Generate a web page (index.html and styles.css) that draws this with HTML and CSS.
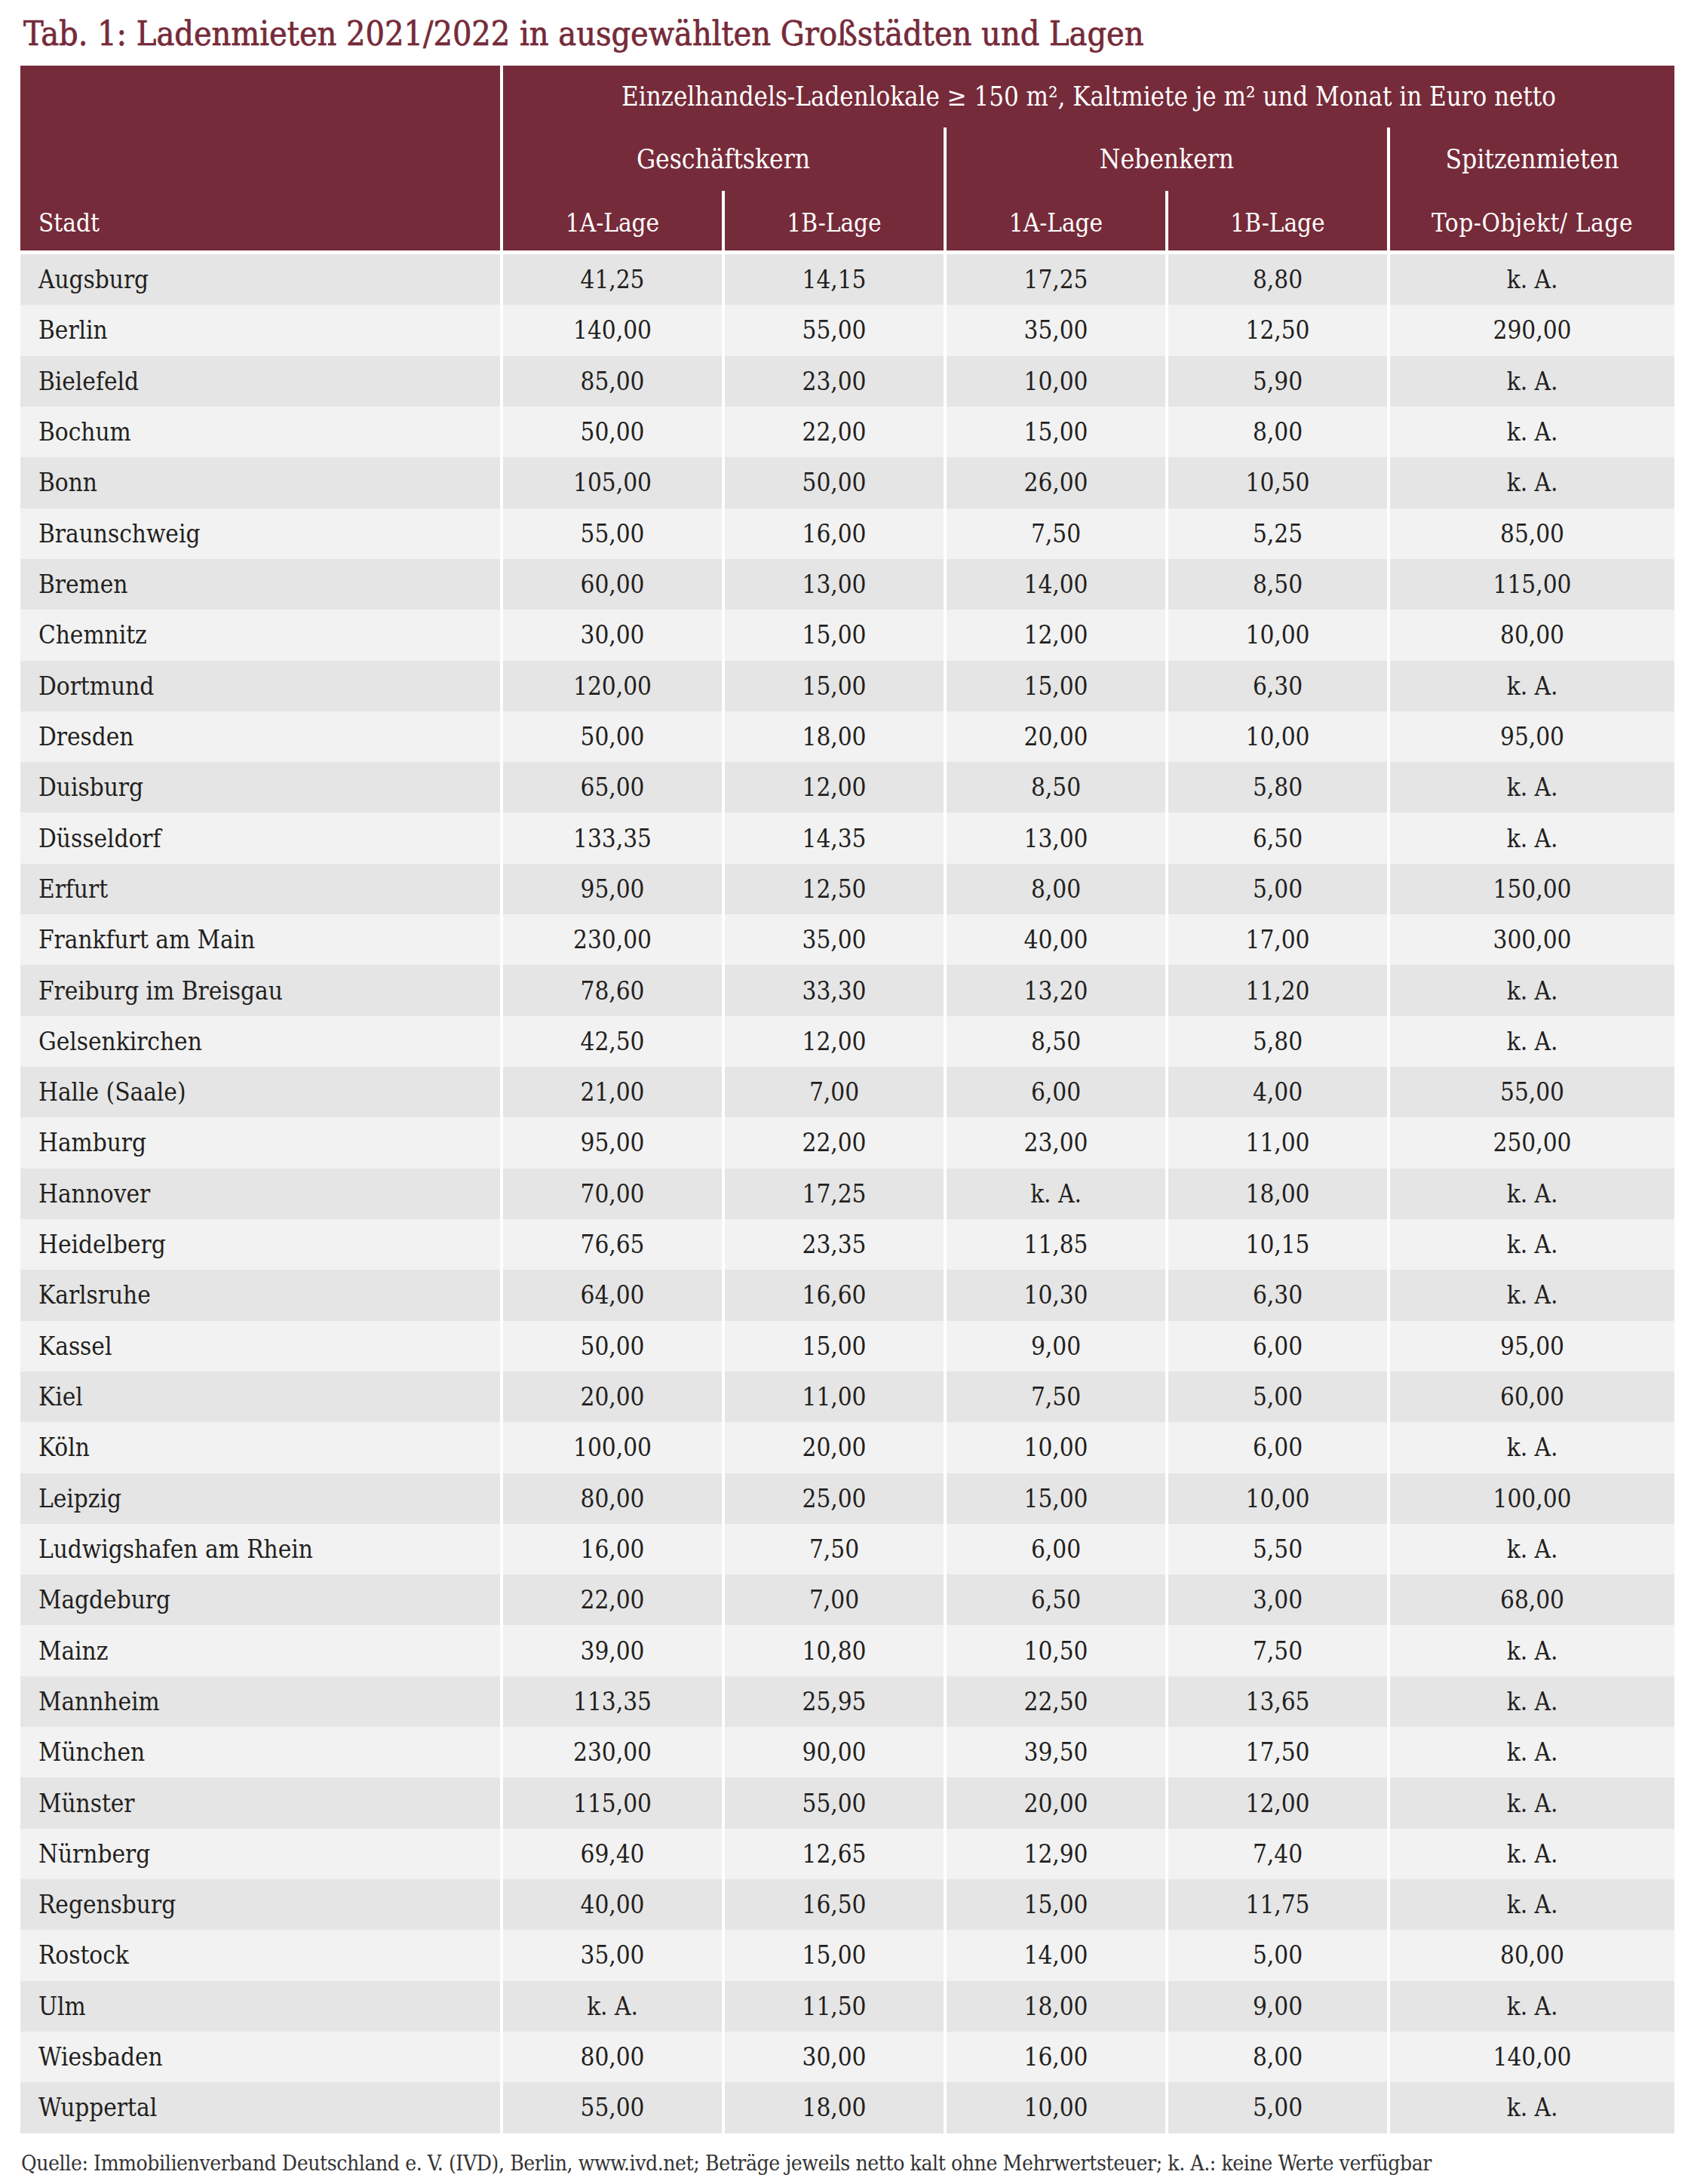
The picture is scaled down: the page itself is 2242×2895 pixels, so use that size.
FILE: index.html
```html
<!DOCTYPE html>
<html lang="de">
<head>
<meta charset="utf-8">
<title>Tab. 1: Ladenmieten 2021/2022</title>
<link rel="stylesheet" href="styles.css">
</head>
<body>
<div class="page">
  <h1 class="title">Tab. 1: Ladenmieten 2021/2022 in ausgewählten Großstädten und Lagen</h1>
  <table class="rent">
    <colgroup>
      <col class="c-city"><col class="c-num"><col class="c-num"><col class="c-num"><col class="c-num"><col class="c-top">
    </colgroup>
    <thead>
      <tr class="h1row">
        <th rowspan="3" class="th-city">Stadt</th>
        <th colspan="5">Einzelhandels-Ladenlokale ≥ 150 m², Kaltmiete je m² und Monat in Euro netto</th>
      </tr>
      <tr class="h2row">
        <th colspan="2">Geschäftskern</th>
        <th colspan="2">Nebenkern</th>
        <th>Spitzenmieten</th>
      </tr>
      <tr class="h3row">
        <th>1A-Lage</th>
        <th>1B-Lage</th>
        <th>1A-Lage</th>
        <th>1B-Lage</th>
        <th class="th-top">Top-Objekt/ Lage</th>
      </tr>
    </thead>
    <tbody>
      <tr><td>Augsburg</td><td>41,25</td><td>14,15</td><td>17,25</td><td>8,80</td><td>k. A.</td></tr>
      <tr><td>Berlin</td><td>140,00</td><td>55,00</td><td>35,00</td><td>12,50</td><td>290,00</td></tr>
      <tr><td>Bielefeld</td><td>85,00</td><td>23,00</td><td>10,00</td><td>5,90</td><td>k. A.</td></tr>
      <tr><td>Bochum</td><td>50,00</td><td>22,00</td><td>15,00</td><td>8,00</td><td>k. A.</td></tr>
      <tr><td>Bonn</td><td>105,00</td><td>50,00</td><td>26,00</td><td>10,50</td><td>k. A.</td></tr>
      <tr><td>Braunschweig</td><td>55,00</td><td>16,00</td><td>7,50</td><td>5,25</td><td>85,00</td></tr>
      <tr><td>Bremen</td><td>60,00</td><td>13,00</td><td>14,00</td><td>8,50</td><td>115,00</td></tr>
      <tr><td>Chemnitz</td><td>30,00</td><td>15,00</td><td>12,00</td><td>10,00</td><td>80,00</td></tr>
      <tr><td>Dortmund</td><td>120,00</td><td>15,00</td><td>15,00</td><td>6,30</td><td>k. A.</td></tr>
      <tr><td>Dresden</td><td>50,00</td><td>18,00</td><td>20,00</td><td>10,00</td><td>95,00</td></tr>
      <tr><td>Duisburg</td><td>65,00</td><td>12,00</td><td>8,50</td><td>5,80</td><td>k. A.</td></tr>
      <tr><td>Düsseldorf</td><td>133,35</td><td>14,35</td><td>13,00</td><td>6,50</td><td>k. A.</td></tr>
      <tr><td>Erfurt</td><td>95,00</td><td>12,50</td><td>8,00</td><td>5,00</td><td>150,00</td></tr>
      <tr><td>Frankfurt am Main</td><td>230,00</td><td>35,00</td><td>40,00</td><td>17,00</td><td>300,00</td></tr>
      <tr><td>Freiburg im Breisgau</td><td>78,60</td><td>33,30</td><td>13,20</td><td>11,20</td><td>k. A.</td></tr>
      <tr><td>Gelsenkirchen</td><td>42,50</td><td>12,00</td><td>8,50</td><td>5,80</td><td>k. A.</td></tr>
      <tr><td>Halle (Saale)</td><td>21,00</td><td>7,00</td><td>6,00</td><td>4,00</td><td>55,00</td></tr>
      <tr><td>Hamburg</td><td>95,00</td><td>22,00</td><td>23,00</td><td>11,00</td><td>250,00</td></tr>
      <tr><td>Hannover</td><td>70,00</td><td>17,25</td><td>k. A.</td><td>18,00</td><td>k. A.</td></tr>
      <tr><td>Heidelberg</td><td>76,65</td><td>23,35</td><td>11,85</td><td>10,15</td><td>k. A.</td></tr>
      <tr><td>Karlsruhe</td><td>64,00</td><td>16,60</td><td>10,30</td><td>6,30</td><td>k. A.</td></tr>
      <tr><td>Kassel</td><td>50,00</td><td>15,00</td><td>9,00</td><td>6,00</td><td>95,00</td></tr>
      <tr><td>Kiel</td><td>20,00</td><td>11,00</td><td>7,50</td><td>5,00</td><td>60,00</td></tr>
      <tr><td>Köln</td><td>100,00</td><td>20,00</td><td>10,00</td><td>6,00</td><td>k. A.</td></tr>
      <tr><td>Leipzig</td><td>80,00</td><td>25,00</td><td>15,00</td><td>10,00</td><td>100,00</td></tr>
      <tr><td>Ludwigshafen am Rhein</td><td>16,00</td><td>7,50</td><td>6,00</td><td>5,50</td><td>k. A.</td></tr>
      <tr><td>Magdeburg</td><td>22,00</td><td>7,00</td><td>6,50</td><td>3,00</td><td>68,00</td></tr>
      <tr><td>Mainz</td><td>39,00</td><td>10,80</td><td>10,50</td><td>7,50</td><td>k. A.</td></tr>
      <tr><td>Mannheim</td><td>113,35</td><td>25,95</td><td>22,50</td><td>13,65</td><td>k. A.</td></tr>
      <tr><td>München</td><td>230,00</td><td>90,00</td><td>39,50</td><td>17,50</td><td>k. A.</td></tr>
      <tr><td>Münster</td><td>115,00</td><td>55,00</td><td>20,00</td><td>12,00</td><td>k. A.</td></tr>
      <tr><td>Nürnberg</td><td>69,40</td><td>12,65</td><td>12,90</td><td>7,40</td><td>k. A.</td></tr>
      <tr><td>Regensburg</td><td>40,00</td><td>16,50</td><td>15,00</td><td>11,75</td><td>k. A.</td></tr>
      <tr><td>Rostock</td><td>35,00</td><td>15,00</td><td>14,00</td><td>5,00</td><td>80,00</td></tr>
      <tr><td>Ulm</td><td>k. A.</td><td>11,50</td><td>18,00</td><td>9,00</td><td>k. A.</td></tr>
      <tr><td>Wiesbaden</td><td>80,00</td><td>30,00</td><td>16,00</td><td>8,00</td><td>140,00</td></tr>
      <tr><td>Wuppertal</td><td>55,00</td><td>18,00</td><td>10,00</td><td>5,00</td><td>k. A.</td></tr>
    </tbody>
  </table>
  <p class="source">Quelle: Immobilienverband Deutschland e. V. (IVD), Berlin, www.ivd.net; Beträge jeweils netto kalt ohne Mehrwertsteuer; k. A.: keine Werte verfügbar</p>
</div>
</body>
</html>
```

FILE: styles.css
```css
html, body {
  margin: 0;
  padding: 0;
  background: #ffffff;
}

.page {
  padding: 17px 0 0 27px;
  font-family: "DejaVu Serif Condensed", "DejaVu Serif", serif;
  font-stretch: condensed;
}

.title {
  margin: 0 0 14px 0;
  height: 56px;
  font-size: 44.5px;
  line-height: 56px;
  font-weight: normal;
  color: #762b3a;
  -webkit-text-stroke: 0.7px #762b3a;
  padding-left: 4px;
  white-space: nowrap;
}

.rent {
  border-collapse: separate;
  border-spacing: 4px 0;
  margin-left: -4px;
  table-layout: fixed;
  width: 2201px;
}

.c-city { width: 636px; }
.c-num { width: 290px; }
.c-top { width: 377px; }

.rent th {
  background: #762b3a;
  color: #ffffff;
  font-weight: normal;
  font-size: 33px;
  text-align: center;
  vertical-align: middle;
  padding: 0;
  white-space: nowrap;
}

.rent .th-city {
  text-align: left;
  vertical-align: bottom;
  padding: 0 0 17px 24px;
}

.h1row th { height: 82px; font-size: 34.5px; }
.h1row .th-city { font-size: 33px; }
.h2row th { height: 84px; font-size: 35px; }
.h3row th { height: 79px; padding-top: 6px; box-sizing: border-box; }
.h3row .th-top { letter-spacing: 0.6px; }

.rent td {
  height: 67.32px;
  padding: 0;
  font-size: 33px;
  color: #231f20;
  text-align: center;
  vertical-align: middle;
  white-space: nowrap;
}

.rent td:first-child {
  text-align: left;
  padding-left: 24px;
}

.rent tbody tr:nth-child(odd) td { background: #e5e5e5; }
.rent tbody tr:nth-child(even) td { background: #f2f2f2; }

.rent tbody tr:first-child td {
  border-top: 5px solid #ffffff;
  background-clip: padding-box;
}

.source {
  margin: 20px 0 0 1px;
  font-size: 28px;
  line-height: 40px;
  letter-spacing: -0.4px;
  color: #333333;
  white-space: nowrap;
}
```
